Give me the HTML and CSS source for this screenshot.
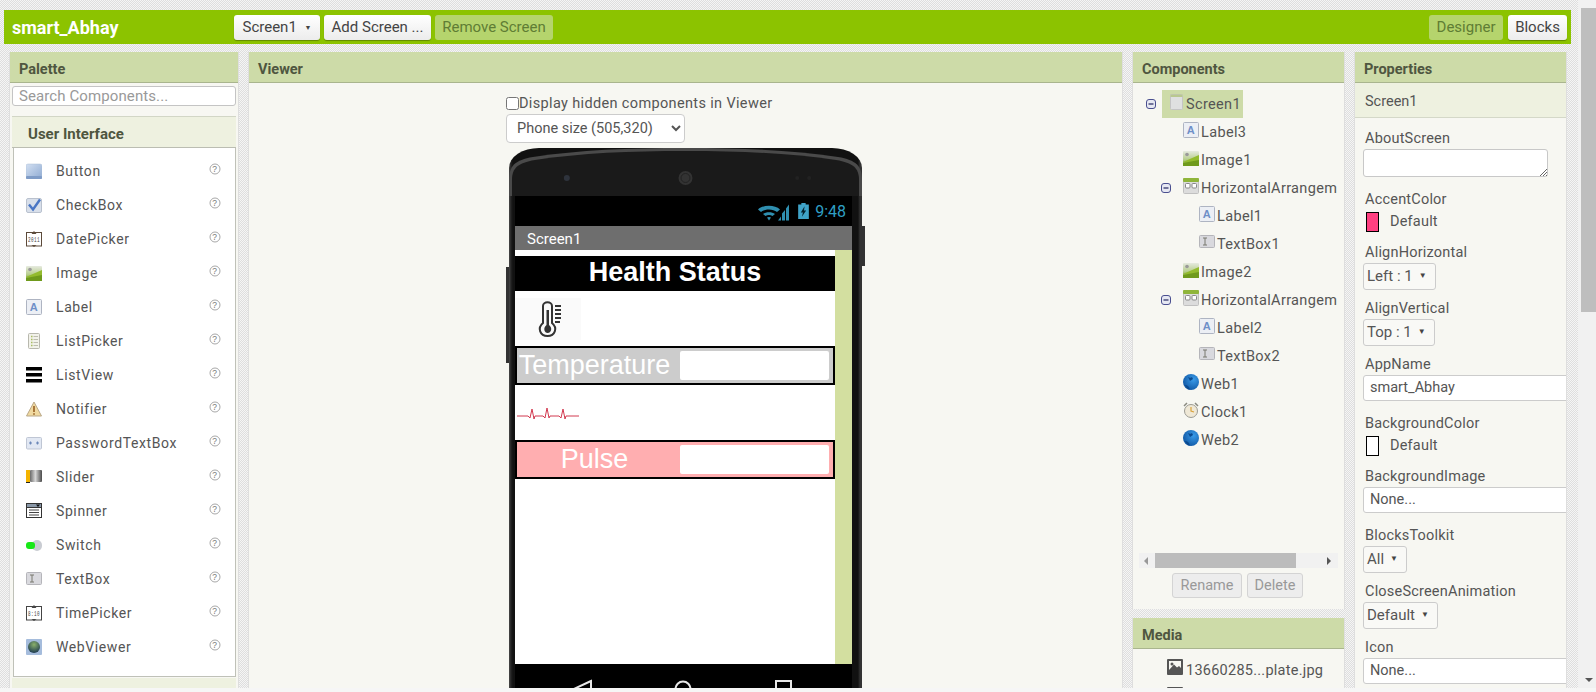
FILE: index.html
```html
<!DOCTYPE html>
<html lang="en">
<head>
<meta charset="utf-8">
<title>smart_Abhay</title>
<link rel="stylesheet" href="styles.css">
</head>
<body>
<svg class="defs" aria-hidden="true">
  <defs>
    <linearGradient id="gBtn" x1="0" y1="0" x2="1" y2="1"><stop offset="0" stop-color="#d3e0f2"/><stop offset="1" stop-color="#8eaad2"/></linearGradient>
    <linearGradient id="gImg" x1="0" y1="0" x2="0" y2="1"><stop offset="0" stop-color="#e6eae0"/><stop offset=".55" stop-color="#b9cf90"/><stop offset="1" stop-color="#6b9a1e"/></linearGradient>
    <radialGradient id="gGlobe" cx=".65" cy=".35" r=".8"><stop offset="0" stop-color="#3a9be8"/><stop offset="1" stop-color="#0a4f9c"/></radialGradient>
    <radialGradient id="gWv" cx=".5" cy=".3" r=".7"><stop offset="0" stop-color="#8ab06a"/><stop offset="1" stop-color="#1e3b50"/></radialGradient>
    <linearGradient id="gSlide" x1="0" y1="0" x2="1" y2="0"><stop offset="0" stop-color="#6a6a6a"/><stop offset=".45" stop-color="#d8d8d8"/><stop offset="1" stop-color="#4a4a4a"/></linearGradient>
    <symbol id="i-button" viewBox="0 0 16 16"><rect x="0" y="1" width="16" height="15" rx="2" fill="url(#gBtn)" stroke="#a9bcd6" stroke-width=".5"/><rect x="0" y="13" width="16" height="3" rx="1" fill="#7f9cc7"/></symbol>
    <symbol id="i-check" viewBox="0 0 16 16"><rect x=".5" y="1.500" width="15" height="14" rx="1.500" fill="#d8dfea" stroke="#b9c1ce"/><path d="M3 7.500 7 12.500 14 2.500" fill="none" stroke="#4a76c4" stroke-width="2.400"/></symbol>
    <symbol id="i-date" viewBox="0 0 16 16"><rect x=".5" y="1.500" width="15" height="13.500" fill="#fff" stroke="#5c4a3a"/><path d="M8 0 5.500 3h5zM8 16l-2.500-2h5z" fill="#5c4a3a"/><text x="8" y="11" class="tiny" textLength="12" lengthAdjust="spacingAndGlyphs">2011</text></symbol>
    <symbol id="i-image" viewBox="0 0 16 16"><rect x="0" y="1" width="16" height="15" rx="1" fill="url(#gImg)"/><circle cx="4" cy="4.500" r="1.800" fill="#9a9a9a"/><path d="M0 12 16 5v7.500H0z" fill="#93bb2e"/><path d="M0 13 16 10v6H0z" fill="#6f9a1c"/></symbol>
    <symbol id="i-label" viewBox="0 0 16 16"><rect x=".5" y=".5" width="15" height="15" rx="1" fill="#eceff5" stroke="#aeb4c2"/><text x="8" y="12" class="lbl-a">A</text></symbol>
    <symbol id="i-list" viewBox="0 0 16 16"><rect x="2.500" y=".5" width="11" height="15" rx="1" fill="#f2f2ea" stroke="#b8b8ae"/><path d="M5 3.500h1.500M5 6.500h1.500M5 9.500h1.500M5 12.500h1.500" stroke="#a8bc60" stroke-width="1.500"/><path d="M7.500 3.500h4.500M7.500 6.500h4.500M7.500 9.500h4.500M7.500 12.500h4.500" stroke="#bdbdb0"/></symbol>
    <symbol id="i-listview" viewBox="0 0 16 16"><path d="M0 0h16v3.500H0zM0 6h16v3.500H0zM0 12h16v3.500H0z" fill="#000"/></symbol>
    <symbol id="i-notifier" viewBox="0 0 16 16"><path d="M8 1 15.500 15H.5z" fill="#f0d9a0" stroke="#b9a787"/><path d="M8 5v6" stroke="#a8763a" stroke-width="2"/><circle cx="8" cy="13" r="1" fill="#a8763a"/></symbol>
    <symbol id="i-pass" viewBox="0 0 16 16"><rect x=".5" y="2.500" width="15" height="11.500" rx="1" fill="#e2e8f3" stroke="#bfc6d4"/><path d="M4.500 6.500v3M3 8h3M11.500 6.500v3M10 8h3" stroke="#6c87b8" stroke-width="1.200"/></symbol>
    <symbol id="i-slider" viewBox="0 0 16 16"><rect x="0" y="1" width="4" height="12" fill="#f4b400"/><rect x="4" y="1" width="12" height="12" rx="1" fill="url(#gSlide)"/><path d="M0 13.500h4" stroke="#222"/></symbol>
    <symbol id="i-spinner" viewBox="0 0 16 16"><rect x=".5" y=".5" width="15" height="14" fill="#fff" stroke="#333"/><rect x=".5" y=".5" width="15" height="4" fill="#8a98a8" stroke="#333"/><path d="M10 1.500h4l-2 2.500z" fill="#111"/><path d="M3 7h10M3 9.500h10M3 12h10" stroke="#444"/></symbol>
    <symbol id="i-switch" viewBox="0 0 16 16"><rect x="6" y="3" width="10" height="11" rx="5" fill="#c9ccd2"/><rect x="0" y="5" width="9" height="7" rx="3" fill="#17e817"/></symbol>
    <symbol id="i-text" viewBox="0 0 16 16"><rect x=".5" y="1.500" width="15" height="12" rx="1" fill="#d9d9de" stroke="#b5b5ba"/><path d="M4 4h4M4 11h4M6 4v7" stroke="#78786e"/></symbol>
    <symbol id="i-time" viewBox="0 0 16 16"><rect x=".5" y="1.500" width="15" height="13.500" fill="#fff" stroke="#444"/><path d="M8 0 5.500 3h5zM8 16l-2.500-2h5z" fill="#444"/><text x="8" y="11" class="tiny" textLength="12" lengthAdjust="spacingAndGlyphs">8:10</text></symbol>
    <symbol id="i-web" viewBox="0 0 16 16"><rect x="0" y="0" width="16" height="16" rx="1" fill="#a5bcdc"/><circle cx="8" cy="8" r="6" fill="url(#gWv)"/></symbol>
    <symbol id="i-screen" viewBox="0 0 14 16"><rect x=".5" y=".5" width="12" height="15" rx="1" fill="#dfe0e0" stroke="#c4c4c4"/><rect x=".5" y=".5" width="12" height="2.500" fill="#b9c88f"/></symbol>
    <symbol id="i-arr" viewBox="0 0 16 16"><rect x=".5" y=".5" width="15" height="15" rx="1" fill="#dcdcdc" stroke="#c0c0c0"/><rect x="0" y="0" width="16" height="4" rx="1" fill="#8fb53a"/><rect x="2.500" y="5.500" width="4.500" height="4.500" rx="1" fill="#fff" stroke="#888"/><rect x="9" y="5.500" width="4.500" height="4.500" rx="1" fill="#fff" stroke="#888"/></symbol>
    <symbol id="i-globe" viewBox="0 0 16 16"><circle cx="8" cy="8" r="8" fill="url(#gGlobe)"/><path d="M2 11c2 0 4 1 5 4.800C4.500 15.500 2.800 13.500 2 11zM5 3c1.500 1 3 1 4 0l1 2-3 2z" fill="#0a4a90"/></symbol>
    <symbol id="i-clock" viewBox="0 0 16 16"><circle cx="8" cy="9" r="6.500" fill="#efe8d6" stroke="#9b9b94"/><path d="M1 4 4 1M15 4 12 1" stroke="#8a8a80" stroke-width="1.500"/><path d="M8 5v4l3 1" fill="none" stroke="#d9a23a" stroke-width="1.200"/></symbol>
    <symbol id="i-photo" viewBox="0 0 16 16"><rect x="0" y="0" width="16" height="16" rx="1" fill="#555"/><rect x="2" y="2" width="12" height="9" fill="#f7f7f2"/><circle cx="5" cy="5" r="1.500" fill="#555"/><path d="M2 11 7 5.500l3 3 2-1.500 2 2V11z" fill="#555"/></symbol>
    <symbol id="i-help" viewBox="0 0 12 12"><circle cx="6" cy="6" r="5" fill="#fff" stroke="#a8a8a8"/><text x="6" y="9" class="help-q">?</text></symbol>
    <symbol id="i-minus" viewBox="0 0 10 10"><rect x=".5" y=".5" width="9" height="9" rx="2.500" fill="#e6e8f2" stroke="#4a4f8f"/><path d="M2.500 5h5" stroke="#23265f" stroke-width="1.200"/></symbol>
  </defs>
</svg>

<div class="page">
  <header class="topbar">
    <span class="project">smart_Abhay</span>
    <div class="topgroup">
      <button class="tbtn tbtn-screen">Screen1 <span class="caret">▼</span></button>
      <button class="tbtn tbtn-add">Add Screen ...</button>
      <button class="tbtn tbtn-off tbtn-remove">Remove Screen</button>
    </div>
    <div class="topright">
      <button class="tbtn tbtn-off tbtn-designer">Designer</button>
      <button class="tbtn tbtn-blocks">Blocks</button>
    </div>
  </header>

  <main class="columns">
    <section class="panel palette">
      <h2 class="phead">Palette</h2>
      <div class="search">Search Components...</div>
      <h3 class="accordion">User Interface</h3>
      <ul class="plist">
        <li class="pitem"><svg class="ico"><use href="#i-button"/></svg><span class="pname">Button</span><svg class="help"><use href="#i-help"/></svg></li>
        <li class="pitem"><svg class="ico"><use href="#i-check"/></svg><span class="pname">CheckBox</span><svg class="help"><use href="#i-help"/></svg></li>
        <li class="pitem"><svg class="ico"><use href="#i-date"/></svg><span class="pname">DatePicker</span><svg class="help"><use href="#i-help"/></svg></li>
        <li class="pitem"><svg class="ico"><use href="#i-image"/></svg><span class="pname">Image</span><svg class="help"><use href="#i-help"/></svg></li>
        <li class="pitem"><svg class="ico"><use href="#i-label"/></svg><span class="pname">Label</span><svg class="help"><use href="#i-help"/></svg></li>
        <li class="pitem"><svg class="ico"><use href="#i-list"/></svg><span class="pname">ListPicker</span><svg class="help"><use href="#i-help"/></svg></li>
        <li class="pitem"><svg class="ico"><use href="#i-listview"/></svg><span class="pname">ListView</span><svg class="help"><use href="#i-help"/></svg></li>
        <li class="pitem"><svg class="ico"><use href="#i-notifier"/></svg><span class="pname">Notifier</span><svg class="help"><use href="#i-help"/></svg></li>
        <li class="pitem"><svg class="ico"><use href="#i-pass"/></svg><span class="pname">PasswordTextBox</span><svg class="help"><use href="#i-help"/></svg></li>
        <li class="pitem"><svg class="ico"><use href="#i-slider"/></svg><span class="pname">Slider</span><svg class="help"><use href="#i-help"/></svg></li>
        <li class="pitem"><svg class="ico"><use href="#i-spinner"/></svg><span class="pname">Spinner</span><svg class="help"><use href="#i-help"/></svg></li>
        <li class="pitem"><svg class="ico"><use href="#i-switch"/></svg><span class="pname">Switch</span><svg class="help"><use href="#i-help"/></svg></li>
        <li class="pitem"><svg class="ico"><use href="#i-text"/></svg><span class="pname">TextBox</span><svg class="help"><use href="#i-help"/></svg></li>
        <li class="pitem"><svg class="ico"><use href="#i-time"/></svg><span class="pname">TimePicker</span><svg class="help"><use href="#i-help"/></svg></li>
        <li class="pitem"><svg class="ico"><use href="#i-web"/></svg><span class="pname">WebViewer</span><svg class="help"><use href="#i-help"/></svg></li>
      </ul>
      <h3 class="accordion accordion-next">Layout</h3>
    </section>

    <section class="panel viewer">
      <h2 class="phead">Viewer</h2>
      <div class="vbody">
        <label class="hidden-toggle"><input type="checkbox" class="cb">Display hidden components in Viewer</label>
        <select class="size-select"><option>Phone size (505,320)</option></select>
        <div class="phone">
          <span class="side side-left"></span>
          <span class="side side-right"></span>
          <svg class="bezel" viewBox="0 0 354 48" width="353" height="48">
            <path d="M0 48V32C0 18 6 12 24 9 70 2 120 0 177 0s107 2 153 9c18 3 24 9 24 23v16z" fill="#4a4a4a"/>
            <path d="M3 48V32C3 20 9 15 26 12 72 5 122 3 177 3s105 2 151 9c17 3 23 8 23 20v16z" fill="#1a1a1a"/>
            <circle cx="58" cy="30" r="3" fill="#2e333c"/>
            <circle cx="177" cy="30" r="7" fill="#333"/>
            <circle cx="177" cy="30" r="4.500" fill="none" stroke="#222"/>
            <circle cx="289" cy="30" r="2" fill="#222"/><circle cx="301" cy="30" r="2" fill="#222"/>
          </svg>
          <div class="screen">
            <div class="status">
              <svg class="st-ic" viewBox="0 0 34 16" width="34" height="17">
                <path d="M0 5C5 0 17 0 22 5l-3 2.500C15 4 7 4 3 7.500zM5 9.500c3-2.500 9-2.500 12 0l-2.500 2c-2-1.500-5-1.500-7 0zM9 13c1-.8 3-.8 4 0l-2 3z" fill="#2f8fb0"/>
                <path d="M20 16l3-4v4zM24 16v-7l3-3.500V16zM28 16V4l3-4v16z" fill="#2f8fb0"/>
              </svg>
              <svg class="st-bat" viewBox="0 0 10 15" width="11" height="16">
                <path d="M3 0h4v1.500h3V15H0V1.500h3z" fill="#3fa3c8"/>
                <path d="M6 3 2.500 9h2l-1 4L7.500 7h-2z" fill="#04222e"/>
              </svg>
              <span class="clock">9:48</span>
            </div>
            <div class="appbar">Screen1</div>
            <div class="content">
              <div class="form">
                <div class="title">Health Status</div>
                <div class="pic-row pic-row-1">
                  <div class="pic pic-thermo">
                    <svg viewBox="0 0 66 42" width="66" height="42">
                      <path d="M28 8c0-5 9-5 9 0v17c6 5 3 13-4.500 13S22 30 28 25z" fill="none" stroke="#333" stroke-width="2"/>
                      <path d="M31.500 12h2.500v15c4 3 2 8-1.300 8s-5-5-1.200-8z" fill="#333"/>
                      <path d="M40 8h6M40 12h6M40 16h6M40 20h6M40 24h5" stroke="#333" stroke-width="1.800"/>
                    </svg>
                  </div>
                </div>
                <div class="harr harr-gray">
                  <span class="harr-label">Temperature</span>
                  <span class="harr-box"></span>
                </div>
                <div class="pic-row pic-row-2">
                  <svg class="ecg" viewBox="0 0 64 14" width="66" height="14">
                    <path d="M0 9h11l2 2 2-9 2 10 1-3h8l2 2 2-10 2 10 1-2h9l2 2 2-9 2 10 1-3h13" fill="none" stroke="#d23a50"/>
                  </svg>
                </div>
                <div class="harr harr-pink">
                  <span class="harr-label">Pulse</span>
                  <span class="harr-box"></span>
                </div>
              </div>
              <div class="fake-scroll"></div>
            </div>
            <div class="nav">
              <svg viewBox="0 0 337 40" width="337" height="40">
                <path d="M76 17 61 24 76 31z" fill="none" stroke="#e8e8e8" stroke-width="2"/>
                <circle cx="168" cy="25" r="7.500" fill="none" stroke="#e8e8e8" stroke-width="2"/>
                <rect x="261" y="17" width="15" height="15" fill="none" stroke="#e8e8e8" stroke-width="2"/>
              </svg>
            </div>
          </div>
        </div>
      </div>
    </section>

    <div class="stack">
      <section class="panel components">
        <h2 class="phead">Components</h2>
        <div class="tree">
          <div class="trow trow-root"><svg class="tog"><use href="#i-minus"/></svg><span class="tsel"><svg class="tico tico-screen"><use href="#i-screen"/></svg>Screen1</span></div>
          <div class="trow l1"><svg class="tico"><use href="#i-label"/></svg>Label3</div>
          <div class="trow l1"><svg class="tico"><use href="#i-image"/></svg>Image1</div>
          <div class="trow l1t"><svg class="tog"><use href="#i-minus"/></svg><svg class="tico"><use href="#i-arr"/></svg>HorizontalArrangem</div>
          <div class="trow l2"><svg class="tico"><use href="#i-label"/></svg>Label1</div>
          <div class="trow l2"><svg class="tico"><use href="#i-text"/></svg>TextBox1</div>
          <div class="trow l1"><svg class="tico"><use href="#i-image"/></svg>Image2</div>
          <div class="trow l1t"><svg class="tog"><use href="#i-minus"/></svg><svg class="tico"><use href="#i-arr"/></svg>HorizontalArrangem</div>
          <div class="trow l2"><svg class="tico"><use href="#i-label"/></svg>Label2</div>
          <div class="trow l2"><svg class="tico"><use href="#i-text"/></svg>TextBox2</div>
          <div class="trow l1"><svg class="tico"><use href="#i-globe"/></svg>Web1</div>
          <div class="trow l1"><svg class="tico"><use href="#i-clock"/></svg>Clock1</div>
          <div class="trow l1"><svg class="tico"><use href="#i-globe"/></svg>Web2</div>
        </div>
        <div class="hscroll">
          <span class="arrow arrow-l"></span>
          <span class="thumb"></span>
          <span class="arrow arrow-r"></span>
        </div>
        <div class="comp-actions">
          <button class="gbtn gbtn-rename">Rename</button>
          <button class="gbtn gbtn-delete">Delete</button>
        </div>
      </section>
      <section class="panel media">
        <h2 class="phead">Media</h2>
        <div class="mrow"><svg class="mico"><use href="#i-photo"/></svg>13660285...plate.jpg</div>
        <div class="mrow"><svg class="mico"><use href="#i-photo"/></svg></div>
      </section>
    </div>

    <section class="panel properties">
      <h2 class="phead">Properties</h2>
      <div class="prop-sub">Screen1</div>
      <div class="prop-body">
        <div class="plabel">AboutScreen</div>
        <div class="ptextarea"><svg class="grip" viewBox="0 0 8 8" width="8" height="8"><path d="M8 1 1 8M8 4 4 8M8 7 7 8" stroke="#666"/></svg></div>
        <div class="plabel">AccentColor</div>
        <div class="pcolor"><span class="swatch swatch-pink"></span>Default</div>
        <div class="plabel">AlignHorizontal</div>
        <div class="pselect"><span>Left : 1</span><span class="caret">▼</span></div>
        <div class="plabel">AlignVertical</div>
        <div class="pselect"><span>Top : 1</span><span class="caret">▼</span></div>
        <div class="plabel">AppName</div>
        <div class="pinput">smart_Abhay</div>
        <div class="plabel">BackgroundColor</div>
        <div class="pcolor"><span class="swatch"></span>Default</div>
        <div class="plabel">BackgroundImage</div>
        <div class="pinput">None...</div>
        <div class="plabel">BlocksToolkit</div>
        <div class="pselect"><span>All</span><span class="caret">▼</span></div>
        <div class="plabel">CloseScreenAnimation</div>
        <div class="pselect"><span>Default</span><span class="caret">▼</span></div>
        <div class="plabel">Icon</div>
        <div class="pinput">None...</div>
      </div>
    </section>
  </main>
</div>

<aside class="vscroll">
  <div class="vthumb"></div>
  <div class="vrest"><span class="vdown"></span></div>
</aside>
</body>
</html>
```

FILE: styles.css
```css
* { box-sizing: border-box; }
html, body { height: 100%; }
body {
  margin: 0;
  height: 692px;
  display: flex;
  overflow: hidden;
  background: #f6f6f6;
  font-family: Roboto, "Liberation Sans", sans-serif;
  font-size: 14px;
  color: #555;
}
.defs { position: absolute; width: 0; height: 0; }
.tiny { font: 6.500px "Liberation Mono", monospace; text-anchor: middle; fill: #444; }
.lbl-a { font: bold 11px "Liberation Sans", sans-serif; text-anchor: middle; fill: #6f8fc8; }
.help-q { font: 8.500px "Liberation Sans", sans-serif; text-anchor: middle; fill: #777; }

.page {
  width: 1578px;
  height: 688px;
  flex: none;
  overflow: hidden;
  padding: 10px 0 0 4px;
  background: repeating-conic-gradient(#dedede 0 25%, #f5f5f5 0 50%) 0 0 / 2px 2px;
}

.topbar {
  display: flex;
  align-items: center;
  width: 1567px;
  height: 34px;
  background: #8cc300;
}
.project { width: 230px; padding-left: 8px; font-size: 18px; font-weight: 700; color: #fff; }
.topgroup { display: flex; gap: 4px; }
.topright { display: flex; gap: 5px; margin-left: auto; margin-right: 4px; }
.tbtn {
  height: 25px;
  padding: 0;
  border: 0;
  border-radius: 3px;
  font: 15px Roboto, sans-serif;
  color: #444;
  background: linear-gradient(#fff, #ececec);
  box-shadow: 0 1px 1px rgba(0,0,0,.3);
}
.tbtn-screen { width: 86px; }
.tbtn-add { width: 107px; }
.tbtn-remove { width: 118px; }
.tbtn-designer { width: 74px; }
.tbtn-blocks { width: 59px; }
.tbtn-off { background: #b5d46d; color: #5f7d34; box-shadow: none; }
.caret { font-size: 7px; vertical-align: 2px; margin-left: 4px; color: #444; }

.columns {
  display: grid;
  grid-template-columns: 230px 875px 213px 213px;
  column-gap: 9px;
  margin: 8px 0 0 5px;
}
.panel {
  background: #f7f7f2;
  border-left: 1px solid #dedede;
  border-right: 1px solid #dedede;
  overflow: hidden;
}
.phead {
  margin: 0;
  height: 31px;
  padding: 3px 0 0 9px;
  line-height: 30px;
  font-size: 14.500px;
  font-weight: 700;
  color: #4f5640;
  background: #cddba8;
  border-bottom: 1px solid #a9b58e;
}

/* palette */
.palette { height: 640px; }
.search {
  height: 20px;
  margin: 3px 2px 0 2px;
  padding-left: 6px;
  line-height: 18px;
  font-size: 15px;
  letter-spacing: .1px;
  color: #999;
  background: #fff;
  border: 1px solid #c4c4c4;
  border-radius: 3px;
}
.accordion {
  margin: 0;
  font-size: 15px;
  font-weight: 700;
  color: #4f5640;
  height: 32px;
  line-height: 35px;
  padding-left: 16px;
  background: #eef1e0;
  border-top: 1px solid #d2d6c6;
  border-bottom: 1px solid #bbbdb2;
}
.palette > .accordion { margin: 10px 2px 0 2px; }
.palette > .accordion-next { margin: 1px 2px 0 2px; border: 0; line-height: 32px; }
.plist {
  list-style: none;
  margin: 0 2px 0 3px;
  padding: 6px 0 0;
  height: 529px;
  background: #fff;
  border: 1px solid #bfc1b8;
  border-top: 0;
}
.pitem { display: flex; align-items: center; height: 34px; padding-left: 12px; letter-spacing: .6px; }
.ico { width: 16px; height: 16px; flex: none; }
.pname { margin-left: 14px; flex: 1; }
.help { width: 12px; height: 12px; margin: 0 14px 4px 0; flex: none; }

/* viewer */
.viewer { height: 640px; }
.vbody { padding: 9px 0 0 247px; display: flex; flex-direction: column; align-items: flex-start; }
.hidden-toggle { display: flex; align-items: center; height: 22px; font-size: 14.500px; letter-spacing: .35px; margin-left: 10px; }
.cb { width: 13px; height: 13px; margin: 0; }
.size-select {
  width: 179px;
  height: 29px;
  margin: 0 0 0 10px;
  padding-left: 6px;
  font: 14.500px Roboto, sans-serif;
  color: #555;
  background: #fff;
  border: 1px solid #ccc;
  border-radius: 4px;
}
.phone {
  position: relative;
  width: 353px;
  margin: 5px 0 0 13px;
  height: 622px;
  padding-top: 48px;
  background: linear-gradient(90deg, #4a4a4a 0, #222 2px, #111 4px, #111 calc(100% - 4px), #333 calc(100% - 2px));
  border-radius: 30px 30px 0 0 / 20px 20px 0 0;
}
.bezel { position: absolute; top: 0; left: 0; }
.side { position: absolute; width: 3px; background: #333; }
.side-left { left: -3px; top: 119px; height: 96px; }
.side-right { right: -3px; top: 78px; height: 40px; }
.screen { position: relative; width: 337px; margin-left: 6px; }
.status {
  height: 30px;
  background: #000;
  display: flex;
  align-items: center;
  justify-content: flex-end;
  padding-right: 6px;
  gap: 8px;
}
.st-ic { margin: 2px -2px 0 0; }
.clock { font-size: 16px; color: #2f9fc4; margin-left: -2px; }
.appbar {
  height: 24px;
  padding-left: 12px;
  line-height: 26px;
  font-size: 15px;
  color: #fff;
  background: #6e6e6e;
}
.content { display: flex; height: 414px; background: #fff; }
.form { width: 320px; padding-top: 6px; flex: none; }
.title {
  height: 35px;
  text-align: center;
  font: bold 27px/33px "Liberation Sans", Arial, sans-serif;
  color: #fff;
  background: #000;
}
.pic-row { display: flex; }
.pic-row-1 { height: 55px; padding-top: 7px; }
.pic-row-2 { height: 55px; padding: 22px 0 0 1px; }
.pic-thermo { width: 66px; height: 42px; background: #fafafa; }
.pic-thermo svg { display: block; }
.ecg { display: block; }
.harr {
  display: flex;
  align-items: center;
  height: 39px;
  border: 2px solid #000;
  padding: 0 3px 0 0;
}
.harr-gray { background: #cccccc; }
.harr-pink { background: #ffaeb0; }
.harr-label {
  width: 155px;
  margin-right: 8px;
  text-align: center;
  font: 27px "Liberation Sans", Arial, sans-serif;
  color: #fff;
  flex: none;
}
.harr-box { width: 149px; height: 29px; background: #fff; border-radius: 2px; }
.fake-scroll { flex: 1; background: #d3dfa0; }
.nav { height: 60px; background: #000; }
.nav svg { display: block; }

/* components */
.stack { display: flex; flex-direction: column; gap: 9px; height: 640px; }
.components { height: 557px; flex: none; }
.tree { height: 470px; padding-top: 7px; overflow: hidden; white-space: nowrap; margin-right: 6px; }
.trow { display: flex; align-items: center; height: 28px; font-size: 14.500px; letter-spacing: .35px; overflow: hidden; }
.trow-root { padding-left: 13px; }
.l1 { padding-left: 50px; }
.l1t { padding-left: 28px; }
.l2 { padding-left: 66px; }
.tico { width: 16px; height: 16px; margin: 0 2px 4px 0; flex: none; }
.tico-screen { width: 14px; height: 16px; margin-right: 2px; }
.tog { width: 10px; height: 10px; flex: none; margin: 0 12px 0 0; }
.trow-root .tog { margin-right: 6px; }
.tsel { display: flex; align-items: center; height: 28px; padding: 0 2px 0 8px; background: #cddba8; }
.hscroll {
  display: flex;
  align-items: center;
  height: 15px;
  margin: 0 6px;
  background: #f1f1f1;
}
.arrow { width: 0; height: 0; border-style: solid; border-width: 4px 0; border-color: transparent; }
.arrow-l { margin-left: 5px; border-right: 4px solid #999; }
.arrow-r { margin-left: 31px; border-left: 4px solid #555; }
.thumb { width: 141px; height: 15px; margin-left: 7px; background: #bcbcbc; }
.comp-actions { display: flex; justify-content: center; gap: 5px; margin-top: 5px; padding-right: 2px; }
.gbtn {
  height: 25px;
  padding: 0;
  border: 1px solid #d4d4d4;
  border-radius: 3px;
  font: 14.500px Roboto, sans-serif;
  color: #999;
  background: #ededed;
}
.gbtn-rename { width: 70px; }
.gbtn-delete { width: 56px; }
.media { flex: none; height: 74px; }
.mrow { display: flex; align-items: center; height: 28px; padding-left: 34px; font-size: 14.500px; letter-spacing: .25px; white-space: nowrap; }
.media .phead + .mrow { margin-top: 7px; }
.mico { width: 16px; height: 16px; margin: 0 3px 6px 0; flex: none; }

/* properties */
.properties { height: 640px; }
.prop-sub {
  height: 35px;
  padding-left: 10px;
  line-height: 38px;
  font-size: 14.500px;
  background: #eef1e0;
  border-bottom: 1px solid #d4d8c8;
}
.prop-body { padding: 11px 0 0 8px; }
.plabel { height: 20px; line-height: 20px; padding-left: 2px; font-size: 14.500px; letter-spacing: .2px; white-space: nowrap; }
.ptextarea {
  position: relative;
  width: 185px;
  height: 28px;
  margin-bottom: 13px;
  background: #fff;
  border: 1px solid #c8c8c8;
  border-radius: 3px;
}
.grip { position: absolute; right: 0; bottom: 0; }
.pcolor {
  display: flex;
  align-items: center;
  height: 24px;
  margin-bottom: 9px;
  padding: 0 0 1px 3px;
  font-size: 14.500px;
  letter-spacing: .2px;
}
.swatch { width: 13px; height: 20px; margin-right: 11px; background: #fff; border: 1px solid #000; }
.swatch-pink { background: #ff4081; }
.pselect {
  align-items: center;
  gap: 6px;
  height: 27px;
  margin-bottom: 9px;
  padding: 0 8px 2px 3px;
  font-size: 15px;
  border: 1px solid #ccc;
  border-radius: 3px;
  background: #f9f9f6;
}
.pselect .caret { margin-left: 0; vertical-align: 0; font-size: 8px; }
.plabel + .pselect { display: flex; width: fit-content; }
.pinput {
  width: 230px;
  height: 26px;
  margin-bottom: 13px;
  padding-left: 6px;
  line-height: 24px;
  font-size: 14.500px;
  background: #fff;
  border: 1px solid #ccc;
  border-radius: 3px;
}

/* page scrollbar */
.vscroll { flex: 1; height: 688px; display: flex; flex-direction: column; padding: 8px 0 0 3px; background: #f1f1f1; }
.vthumb { height: 304px; background: #bebebe; }
.vrest { flex: 1; display: flex; align-items: flex-end; justify-content: center; padding-bottom: 6px; }
.vdown { width: 0; height: 0; border-style: solid; border-width: 4px 4px 0; border-color: #555 transparent transparent; }
```
